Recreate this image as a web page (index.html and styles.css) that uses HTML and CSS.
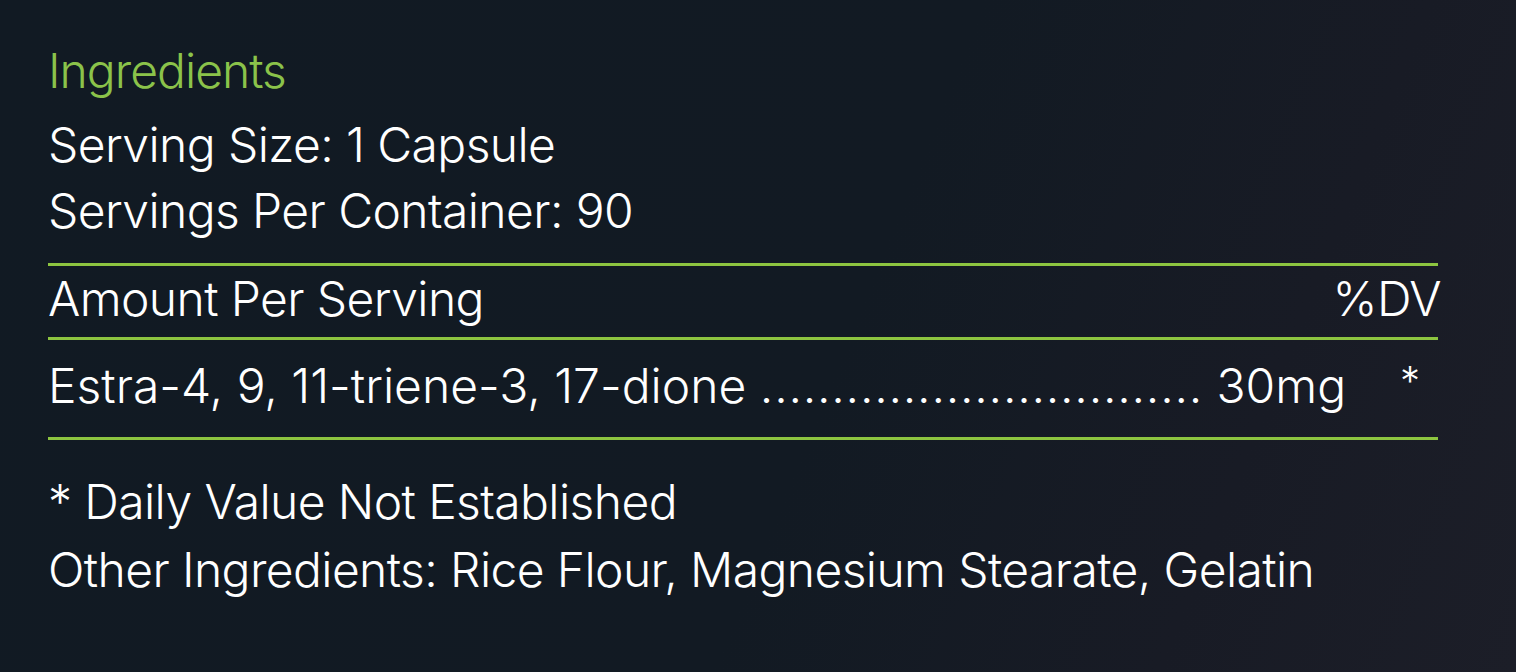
FILE: index.html
```html
<!DOCTYPE html>
<html lang="en">
<head>
<meta charset="utf-8">
<title>Ingredients</title>
<link rel="stylesheet" href="styles.css">
</head>
<body>
<main class="panel">
  <h2 class="title">Ingredients</h2>
  <div class="serving">
    <p>Serving Size: 1 Capsule</p>
    <p>Servings Per Container: 90</p>
  </div>
  <div class="table">
    <div class="row head">
      <span class="name">Amount Per Serving</span>
      <span class="dv">%DV</span>
    </div>
    <div class="row item">
      <span class="name">Estra-4, 9, 11-triene-3, 17-dione <span class="leader">...............................</span> 30mg</span>
      <span class="star">*</span>
    </div>
  </div>
  <div class="notes">
    <p>* Daily Value Not Established</p>
    <p>Other Ingredients: Rice Flour, Magnesium Stearate, Gelatin</p>
  </div>
</main>
</body>
</html>
```

FILE: styles.css
```css
html, body {
  margin: 0;
  height: 100%;
}
body {
  background: linear-gradient(112deg, #111a23 0%, #121a23 55%, #181b25 80%, #1c1e28 100%);
  color: #ffffff;
  font-family: "Inter", "Roboto", "Liberation Sans", sans-serif;
  font-weight: 300;
  font-size: 48px;
  letter-spacing: -0.6px;
}
.panel {
  padding: 38px 78px 0 48px;
}
p { margin: 0; }
.title {
  margin: 0;
  font-size: 48px;
  font-weight: 300;
  line-height: 66px;
  letter-spacing: -1px;
  color: #8bc34a;
}
.serving {
  margin-top: 8px;
  line-height: 66px;
}
.table {
  margin-top: 19px;
  border-top: 3px solid #8dc540;
}
.row {
  display: flex;
  justify-content: space-between;
  line-height: 66px;
}
.head {
  padding-bottom: 5px;
  border-bottom: 3px solid #8dc540;
}
.item {
  padding-top: 13px;
  padding-bottom: 18px;
  border-bottom: 3px solid #8dc540;
}
.item .name { letter-spacing: 0; }
.leader { letter-spacing: 0.75px; }
.dv { white-space: nowrap; margin-right: -3px; }
.star {
  width: 38px;
  text-align: left;
  font-size: 40px;
  line-height: 56px;
}
.notes {
  margin-top: 28px;
  line-height: 68px;
}
```
